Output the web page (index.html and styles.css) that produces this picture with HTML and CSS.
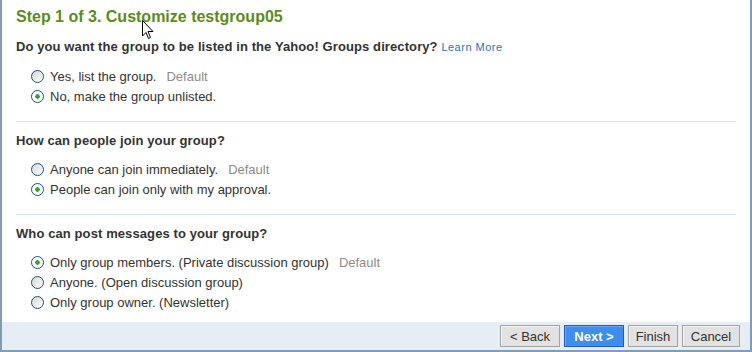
FILE: index.html
```html
<!DOCTYPE html>
<html>
<head>
  <title>Create Group | Yahoo! Groups</title>
  <link rel="stylesheet" href="styles.css">
</head>
<body>
  <div class="wizard">
    <div class="content">
      <h2 class="step-title">Step 1 of 3. Customize testgroup05</h2>

      <div class="section first">
        <h3>Do you want the group to be listed in the Yahoo! Groups directory? <a href="#" class="learn">Learn More</a></h3>
        <label class="opt"><input type="radio" name="listed"> Yes, list the group. <span class="def">Default</span></label>
        <label class="opt"><input type="radio" name="listed" checked> No, make the group unlisted.</label>
      </div>

      <div class="section">
        <h3>How can people join your group?</h3>
        <label class="opt"><input type="radio" name="join"> Anyone can join immediately. <span class="def">Default</span></label>
        <label class="opt"><input type="radio" name="join" checked> People can join only with my approval.</label>
      </div>

      <div class="section last">
        <h3>Who can post messages to your group?</h3>
        <label class="opt"><input type="radio" name="post" checked> Only group members. (Private discussion group) <span class="def">Default</span></label>
        <label class="opt"><input type="radio" name="post"> Anyone. (Open discussion group)</label>
        <label class="opt"><input type="radio" name="post"> Only group owner. (Newsletter)</label>
      </div>
    </div>

    <div class="footer">
      <button class="btn back">&lt; Back</button>
      <button class="btn primary">Next &gt;</button>
      <button class="btn finish">Finish</button>
      <button class="btn cancel">Cancel</button>
    </div>
  </div>

  <svg class="cursor" width="12" height="20" viewBox="0 0 12 20">
    <path d="M0.5 0.5 L0.5 16 L4 12.5 L6.5 18.5 L8.5 17.5 L6 11.5 L11 11.5 Z" fill="#fff" stroke="#000" stroke-width="1"/>
  </svg>
</body>
</html>
```

FILE: styles.css
```css
body {
  margin: 0;
  font-family: "Liberation Sans", Arial, sans-serif;
  color: #333;
  background: #fff;
}
.wizard {
  width: 748px;
  height: 350px;
  border-left: 2px solid #7f9db9;
  border-right: 2px solid #7f9db9;
  border-bottom: 2px solid #7f9db9;
  display: flex;
  flex-direction: column;
}
.content {
  flex: 1;
  padding: 8px 14px 0 14px;
}
.step-title {
  margin: 0 0 12px 0;
  font-size: 16px;
  font-weight: bold;
  color: #5b8c20;
  line-height: 18px;
}
.section {
  border-bottom: 1px solid #d7e3ee;
  padding: 10px 0 15px 0;
}
.section.first {
  padding-top: 0;
}
.section.last {
  border-bottom: none;
  padding-bottom: 9px;
}
h3 {
  margin: 0 0 9px 0;
  font-size: 13px;
  font-weight: bold;
  line-height: 18px;
  color: #333;
  letter-spacing: 0.1px;
}
.section.first h3 {
  margin-bottom: 10px;
}
.learn {
  font-size: 11px;
  font-weight: normal;
  color: #2a6fc4;
  text-decoration: none;
  letter-spacing: 0.5px;
}
.opt {
  display: flex;
  align-items: center;
  height: 20px;
  padding-left: 15px;
  font-size: 13px;
}
.opt input {
  appearance: none;
  width: 13px;
  height: 13px;
  margin: 0 6px 0 0;
  border: 1px solid #1d5282;
  border-radius: 50%;
  background: linear-gradient(135deg, #d6d6d0, #fff);
}
.opt input:checked {
  background: radial-gradient(circle, #34a52c 0, #34a52c 2px, #fff 2.5px), #fff;
}
.def {
  color: #8c8c8c;
  margin-left: 10px;
}
.footer {
  height: 28px;
  flex-shrink: 0;
  background: #e6edf5;
  display: flex;
  justify-content: flex-end;
  align-items: center;
  gap: 4px;
  padding-right: 10px;
}
.btn {
  height: 22px;
  padding: 0;
  font-family: "Liberation Sans", Arial, sans-serif;
  font-size: 13px;
  color: #333;
  background: #e2e2e2;
  border: 1px solid #a3a3a3;
  box-shadow: inset 1px 1px 0 #f4f4f4;
}
.btn.back {
  width: 60px;
}
.btn.finish {
  width: 50px;
}
.btn.cancel {
  width: 58px;
}
.btn.primary {
  width: 60px;
  background: #3d8ef0;
  border-color: #1e5cc0;
  color: #fff;
  font-weight: bold;
  box-shadow: inset 1px 1px 0 #6aaaf5;
}
.cursor {
  position: absolute;
  left: 142px;
  top: 20px;
}
```
